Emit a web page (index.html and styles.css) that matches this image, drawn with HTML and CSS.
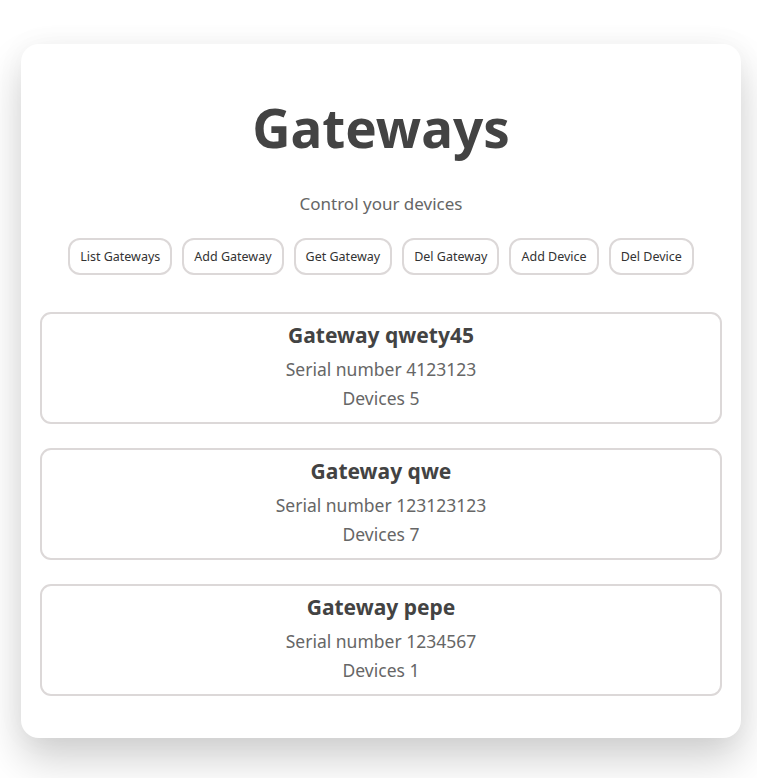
FILE: index.html
```html
<!DOCTYPE html>
<html lang="en">
<head>
  <meta charset="UTF-8" />
  <meta name="viewport" content="width=device-width, initial-scale=1.0" />
  <title>Gateways</title>
  <link rel="stylesheet" href="styles.css">
</head>
<body>
  <div class="panel">
    <h1 class="title">Gateways</h1>
    <p class="subtitle">Control your devices</p>

    <div class="actions">
      <button class="btn">List Gateways</button>
      <button class="btn">Add Gateway</button>
      <button class="btn">Get Gateway</button>
      <button class="btn">Del Gateway</button>
      <button class="btn">Add Device</button>
      <button class="btn">Del Device</button>
    </div>

    <div class="list">
      <div class="gateway">
        <h2 class="gateway-name">Gateway qwety45</h2>
        <p class="gateway-info">Serial number 4123123</p>
        <p class="gateway-info">Devices 5</p>
      </div>
      <div class="gateway">
        <h2 class="gateway-name">Gateway qwe</h2>
        <p class="gateway-info">Serial number 123123123</p>
        <p class="gateway-info">Devices 7</p>
      </div>
      <div class="gateway">
        <h2 class="gateway-name">Gateway pepe</h2>
        <p class="gateway-info">Serial number 1234567</p>
        <p class="gateway-info">Devices 1</p>
      </div>
    </div>
  </div>
</body>
</html>
```

FILE: styles.css
```css
html, body {
  margin: 0;
  padding: 0;
  background-color: white;
  font-family: "Noto Sans", "Open Sans", sans-serif;
}

body {
  padding: 44px 16px 40px 21px;
}

.panel {
  width: 720px;
  box-sizing: border-box;
  padding: 44px 19px 42px;
  background: white;
  border-radius: 18px;
  box-shadow: 0 22px 40px rgba(0, 0, 0, 0.18), 0 0 30px rgba(0, 0, 0, 0.04);
  text-align: center;
}

.title {
  margin: 0;
  font-size: 53px;
  font-weight: 700;
  line-height: 80px;
  color: #434343;
}

.subtitle {
  margin: 24px 0 0;
  font-size: 17px;
  line-height: 24px;
  color: #666;
}

.actions {
  display: flex;
  justify-content: center;
  gap: 10px;
  margin-top: 22px;
}

.btn {
  height: 37px;
  padding: 0 10px;
  border: 2px solid #dcd8d8;
  border-radius: 12px;
  background: white;
  font-family: inherit;
  font-size: 12.5px;
  color: #333;
}

.list {
  display: flex;
  flex-direction: column;
  gap: 24px;
  margin-top: 37px;
}

.gateway {
  height: 112px;
  box-sizing: border-box;
  padding-top: 7px;
  border: 2px solid #dcd8d8;
  border-radius: 11px;
}

.gateway-name {
  margin: 0 0 6px;
  font-size: 21px;
  line-height: 28px;
  font-weight: 700;
  color: #434343;
}

.gateway-info {
  margin: 0;
  font-size: 17.5px;
  line-height: 29px;
  color: #666;
}
```
